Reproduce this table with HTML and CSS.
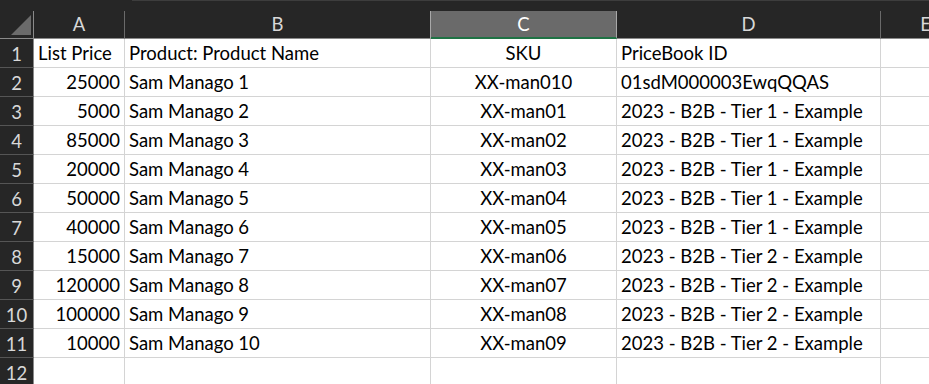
FILE: index.html
```html
<!DOCTYPE html>
<html>
<head>
<meta charset="utf-8">
<link rel="stylesheet" href="styles.css">
</head>
<body>
<div class="sheet">
  <div class="topstrip"><div class="tabgap"></div><div class="tabline"></div></div>
  <div class="grid">
    <div class="corner"><div class="tri"></div></div>
    <div class="colhead">A</div>
    <div class="colhead presel">B</div>
    <div class="colhead sel">C</div>
    <div class="colhead">D</div>
    <div class="colhead ecol">E</div>

    <div class="rowhead">1</div>
    <div class="cell">List Price</div>
    <div class="cell">Product: Product Name</div>
    <div class="cell center">SKU</div>
    <div class="cell">PriceBook ID</div>
    <div class="cell"></div>

    <div class="rowhead">2</div>
    <div class="cell right">25000</div>
    <div class="cell">Sam Manago 1</div>
    <div class="cell center">XX-man010</div>
    <div class="cell">01sdM000003EwqQQAS</div>
    <div class="cell"></div>

    <div class="rowhead">3</div>
    <div class="cell right">5000</div>
    <div class="cell">Sam Manago 2</div>
    <div class="cell center">XX-man01</div>
    <div class="cell">2023 - B2B - Tier 1 - Example</div>
    <div class="cell"></div>

    <div class="rowhead">4</div>
    <div class="cell right">85000</div>
    <div class="cell">Sam Manago 3</div>
    <div class="cell center">XX-man02</div>
    <div class="cell">2023 - B2B - Tier 1 - Example</div>
    <div class="cell"></div>

    <div class="rowhead">5</div>
    <div class="cell right">20000</div>
    <div class="cell">Sam Manago 4</div>
    <div class="cell center">XX-man03</div>
    <div class="cell">2023 - B2B - Tier 1 - Example</div>
    <div class="cell"></div>

    <div class="rowhead">6</div>
    <div class="cell right">50000</div>
    <div class="cell">Sam Manago 5</div>
    <div class="cell center">XX-man04</div>
    <div class="cell">2023 - B2B - Tier 1 - Example</div>
    <div class="cell"></div>

    <div class="rowhead">7</div>
    <div class="cell right">40000</div>
    <div class="cell">Sam Manago 6</div>
    <div class="cell center">XX-man05</div>
    <div class="cell">2023 - B2B - Tier 1 - Example</div>
    <div class="cell"></div>

    <div class="rowhead">8</div>
    <div class="cell right">15000</div>
    <div class="cell">Sam Manago 7</div>
    <div class="cell center">XX-man06</div>
    <div class="cell">2023 - B2B - Tier 2 - Example</div>
    <div class="cell"></div>

    <div class="rowhead">9</div>
    <div class="cell right">120000</div>
    <div class="cell">Sam Manago 8</div>
    <div class="cell center">XX-man07</div>
    <div class="cell">2023 - B2B - Tier 2 - Example</div>
    <div class="cell"></div>

    <div class="rowhead">10</div>
    <div class="cell right">100000</div>
    <div class="cell">Sam Manago 9</div>
    <div class="cell center">XX-man08</div>
    <div class="cell">2023 - B2B - Tier 2 - Example</div>
    <div class="cell"></div>

    <div class="rowhead">11</div>
    <div class="cell right">10000</div>
    <div class="cell">Sam Manago 10</div>
    <div class="cell center">XX-man09</div>
    <div class="cell">2023 - B2B - Tier 2 - Example</div>
    <div class="cell"></div>

    <div class="rowhead">12</div>
    <div class="cell"></div>
    <div class="cell"></div>
    <div class="cell"></div>
    <div class="cell"></div>
    <div class="cell"></div>
  </div>
</div>
</body>
</html>
```
FILE: styles.css
```css
html, body {
  margin: 0;
  padding: 0;
  background: #ffffff;
  overflow: hidden;
}
.sheet {
  width: 929px;
  height: 384px;
  overflow: hidden;
  font-family: Lato, "Liberation Sans", sans-serif;
  font-size: 18.5px;
}
.topstrip {
  height: 11px;
  background: #262626;
  display: flex;
}
.tabgap {
  width: 132px;
}
.tabline {
  flex: 1;
  height: 1px;
  background: #3d3d3d;
}
.grid {
  display: grid;
  grid-template-columns: 34px 91px 306px 186px 264px 90px;
  grid-template-rows: 28px repeat(12, 29px);
}
.grid > div {
  box-sizing: border-box;
  white-space: nowrap;
  overflow: hidden;
}
.corner {
  background: #262626;
  border-right: 1px solid #8a8a8a;
  border-bottom: 1px solid #8a8a8a;
  position: relative;
}
.tri {
  position: absolute;
  left: 11px;
  top: 4px;
  width: 20px;
  height: 20px;
  background: #6b6b6b;
  clip-path: polygon(100% 0, 100% 100%, 0 100%);
}
.colhead {
  background: #262626;
  color: #d8d8d8;
  border-right: 1px solid #6a6a6a;
  border-bottom: 1px solid #8a8a8a;
  text-align: center;
  line-height: 27px;
}
.colhead.presel {
  border-right-color: #a8a8a8;
}
.colhead.sel {
  background: #6a6a6a;
  color: #ffffff;
  border-right-color: #a8a8a8;
  border-bottom: 2px solid #1f7244;
  line-height: 26px;
}
.colhead.ecol {
  text-indent: 0;
}
.rowhead {
  background: #262626;
  color: #d8d8d8;
  border-right: 1px solid #8a8a8a;
  border-bottom: 1px solid #555555;
  text-align: center;
  line-height: 28px;
  padding-top: 1px;
}
.cell {
  color: #000000;
  border-right: 1px solid #d4d4d4;
  border-bottom: 1px solid #d4d4d4;
  line-height: 27px;
  padding: 1px 4px 0 4px;
}
.cell.right {
  text-align: right;
}
.cell.center {
  text-align: center;
}
```
